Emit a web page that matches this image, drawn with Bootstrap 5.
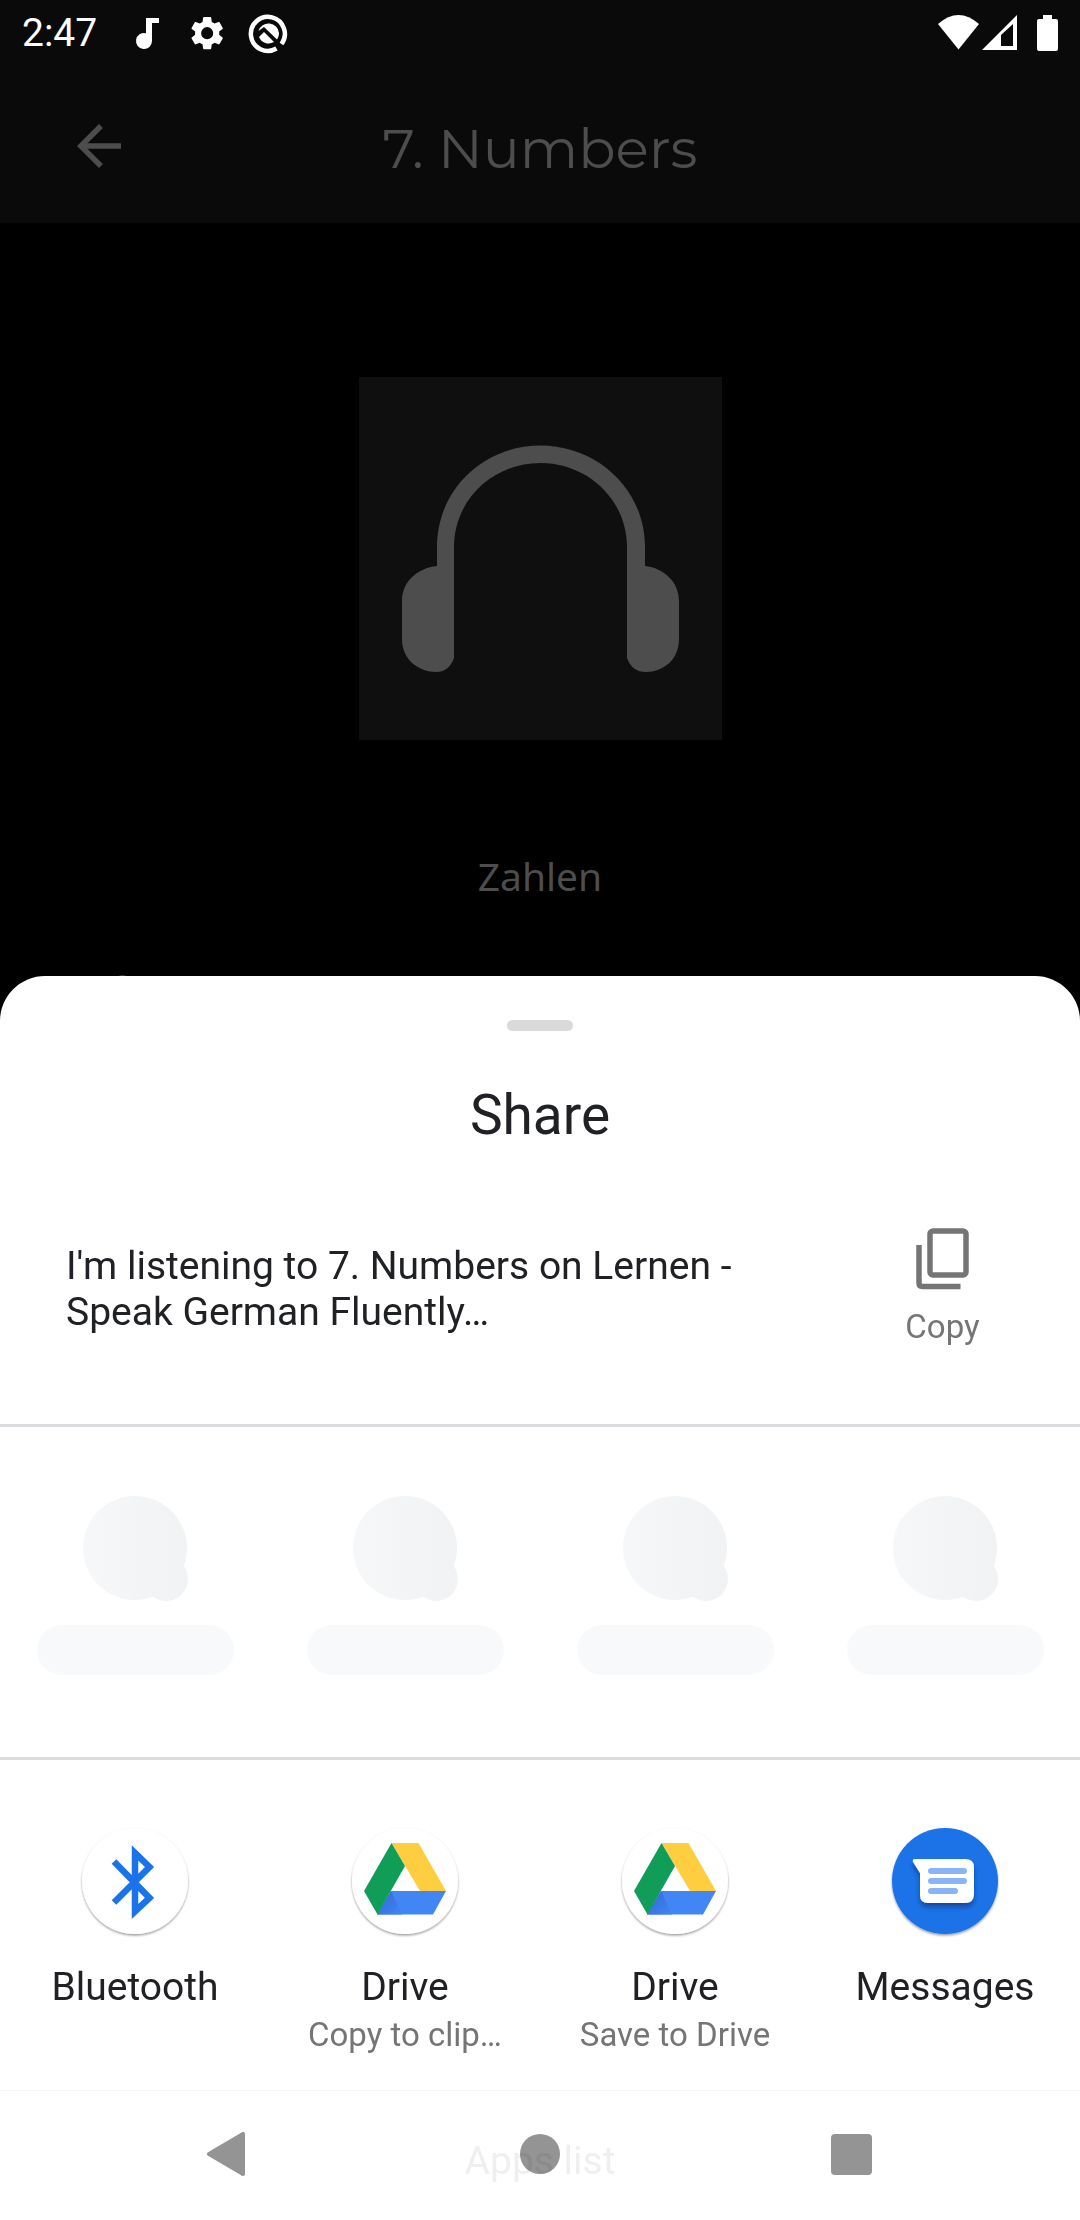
<!DOCTYPE html>
<html lang="en">
<head>
<meta charset="utf-8">
<meta name="viewport" content="width=device-width, initial-scale=1">
<title>Share</title>
<link rel="stylesheet" href="https://cdn.jsdelivr.net/npm/bootstrap@5.3.0/dist/css/bootstrap.min.css">
<style>
  body { background: #000; font-family: Roboto, sans-serif; font-size: 39px; line-height: 46px; color: #4d4d4d; overflow: hidden; }
  svg { display: block; flex: none; }
  .top-area { background: #0a0a0a; }
  .status-bar { height: 66px; padding: 0 20px 0 22px; color: #fff; }
  .title-bar { height: 157px; padding: 2px 66px 0; }
  .title-bar h1 { font: 400 55px/66px Montserrat, Inter, sans-serif; color: #4d4d4d; padding-top: 6px; }
  .side-slot { width: 66px; }
  .track { padding-top: 154px; font-family: "Noto Sans", sans-serif; }
  .cover { width: 363px; background: #0f0f0f; }
  .track-name { margin-top: 110px; line-height: 52px; }
  .track-note { margin-top: 62px; padding-left: 62px; line-height: 52px; }
  .sheet { background: #fff; border-radius: 45px 45px 0 0; color: #202124; }
  .handle { width: 66px; height: 11px; border-radius: 6px; background: #dadada; margin-top: 44px; }
  .sheet h2 { font-size: 55px; line-height: 64px; margin: 52px 0 0; }
  .preview { padding: 78px 66px 0; height: 277px; }
  .preview p { width: 700px; padding-top: 18px; }
  .sub { font-size: 33px; line-height: 39px; color: #757575; }
  .copy-btn { width: 143px; font-family: inherit; }
  .copy-btn svg { margin-bottom: 10px; }
  .section-line { border-top: 3px solid #dadce0; }
  .skeleton { height: 330px; padding-top: 69px; }
  .pill { width: 197px; height: 50px; border-radius: 25px; background: #f8f9fb; margin-top: 24px; }
  .apps { height: 330px; padding-top: 65px; }
  .app-link { color: #202124; text-decoration: none; }
  .app-name { margin-top: 25px; }
  .app-sub { padding: 0 37px; margin-top: 5px; }
  .apps-list { height: 130px; border-top: 1px solid #f5f5f5; padding-top: 47px; color: #efefef; }
  .nav-keys { height: 130px; gap: 267px; }
  .nav-keys .btn { padding: 0; }
  .nav-keys svg { fill: #000; opacity: .42; }
</style>
</head>
<body class="vh-100">
<header class="top-area">
  <div class="status-bar d-flex align-items-center justify-content-between">
    <div class="d-flex align-items-center">
      <span>2:47</span>
      <svg class="ms-4" width="182" height="66" viewBox="121 0 182 66" fill="#fff">
        <path d="M146 18h13v5h-7v18a8 8 0 1 1-6-7.700z"/>
        <g transform="translate(187 13) scale(1.68)"><path d="M19.140 12.940c.04-.3.060-.61.060-.94 0-.32-.02-.64-.07-.94l2.030-1.580c.18-.14.230-.41.120-.61l-1.920-3.320c-.12-.22-.37-.29-.59-.22l-2.390.96c-.5-.38-1.030-.7-1.620-.94l-.36-2.540c-.04-.24-.24-.41-.48-.41h-3.840c-.24 0-.43.17-.47.410l-.36 2.540c-.59.240-1.130.570-1.620.940l-2.390-.96c-.22-.08-.47 0-.59.220L2.740 8.870c-.12.210-.08.470.120.610l2.030 1.580c-.05.3-.09.630-.09.940s.02.640.070.940l-2.030 1.580c-.18.140-.23.410-.12.610l1.920 3.320c.12.220.370.290.590.220l2.390-.96c.5.380 1.030.7 1.620.94l.36 2.540c.05.240.240.410.480.410h3.840c.24 0 .44-.17.470-.41l.36-2.540c.59-.24 1.130-.56 1.620-.94l2.390.96c.22.080.470 0 .590-.22l1.920-3.320c.12-.22.070-.47-.12-.61zM12 15.600a3.600 3.600 0 1 1 0-7.200 3.600 3.600 0 0 1 0 7.200z"/></g>
        <path d="M276.500 48.500A17 17 0 1 1 281.500 44" fill="none" stroke="#fff" stroke-width="4.500"/>
        <path d="M258.500 31a10.500 10.500 0 0 1 20.500 2c0 3-1 5-2 6.500L264 27z"/>
        <path d="M259 37l5-5 10 10a10.500 10.500 0 0 1-15-5z"/>
      </svg>
    </div>
    <svg width="122" height="66" viewBox="938 0 122 66" fill="#fff">
      <path d="M938 24q20.500-18 41 0L958.500 49.500z"/>
      <path fill-rule="evenodd" d="M982 50L1017 15v35zM1001 46h12V24l-12 11z"/>
      <path d="M1043 15h9v4h4q2 0 2 2v28q0 2-2 2h-17q-2 0-2-2V21q0-2 2-2h4z"/>
    </svg>
  </div>
  <div class="title-bar d-flex align-items-center justify-content-between">
    <button class="btn p-0 side-slot border-0" aria-label="Back"><svg width="66" height="66" viewBox="0 0 24 24"><path d="M20 11H7.830l5.590-5.590L12 4l-8 8 8 8 1.410-1.410L7.830 13H20z" fill="#4d4d4d"/></svg></button>
    <h1 class="mb-0">7. Numbers</h1>
    <span class="side-slot"></span>
  </div>
</header>
<main class="track">
  <div class="cover mx-auto">
    <svg width="100%" viewBox="0 0 363 363" fill="#4d4d4d"><path d="M43 224C43 205 58 191 78 189V170C78 112 125 68.500 181.500 68.500S286 112 286 170V189C305 191 320 205 320 224V262C320 283 304 295 287 295Q273 295 268 281V170C268 122 228 86 181.500 86S95 122 95 170V281Q90 295 77 295C60 295 43 283 43 262Z"/></svg>
  </div>
  <div class="track-name text-center">Zahlen</div>
  <div class="track-note">Auf</div>
</main>

<section class="sheet position-fixed bottom-0 start-0 w-100 overflow-hidden" aria-label="Share">
  <div class="handle mx-auto"></div>
  <h2 class="text-center fw-normal">Share</h2>
  <div class="preview d-flex justify-content-between align-items-start">
    <p class="m-0">I'm listening to 7. Numbers on Lernen - Speak German Fluently…</p>
    <button class="btn p-0 border-0 copy-btn sub">
      <svg class="mx-auto" width="66" height="72" viewBox="909 1225 66 72" fill="none" stroke="#757575" stroke-width="5.500"><rect x="929" y="1231" width="36" height="44" rx="3"/><path d="M918 1245v38q0 3.500 3.500 3.500H959.500"/></svg>Copy
    </button>
  </div>
  <div class="section-line"></div>
  <div class="skeleton row g-0">
    <div class="col-3"><svg class="mx-auto" width="105" height="105"><defs><linearGradient id="fade" gradientUnits="userSpaceOnUse" x1="0" x2="105" y1="0" y2="0"><stop stop-color="#f6f7f8"/><stop offset="1" stop-color="#f1f2f3"/></linearGradient></defs><g fill="url(#fade)"><circle cx="52" cy="52" r="52"/><circle cx="83" cy="83" r="22"/></g></svg><div class="pill mx-auto"></div></div>
    <div class="col-3"><svg class="mx-auto" width="105" height="105" fill="url(#fade)"><circle cx="52" cy="52" r="52"/><circle cx="83" cy="83" r="22"/></svg><div class="pill mx-auto"></div></div>
    <div class="col-3"><svg class="mx-auto" width="105" height="105" fill="url(#fade)"><circle cx="52" cy="52" r="52"/><circle cx="83" cy="83" r="22"/></svg><div class="pill mx-auto"></div></div>
    <div class="col-3"><svg class="mx-auto" width="105" height="105" fill="url(#fade)"><circle cx="52" cy="52" r="52"/><circle cx="83" cy="83" r="22"/></svg><div class="pill mx-auto"></div></div>
  </div>
  <div class="section-line"></div>
  <div class="apps row g-0 text-center">
    <a class="col-3 app-link" href="#bluetooth">
      <svg class="mx-auto" width="114" height="114" viewBox="78 1825 114 114">
        <defs><filter id="drop" x="-10%" y="-10%" width="120%" height="125%"><feDropShadow dx="0" dy="1.500" stdDeviation="1.200" flood-opacity=".4"/></filter></defs>
        <circle cx="135" cy="1881" r="53" fill="#fff" filter="url(#drop)"/>
        <path d="M114 1861.500L149 1898 135 1912V1851L149 1868 114 1902" fill="none" stroke="none"/>
        <path d="M114 1861.500L149.500 1898 135 1911.500V1853L149.500 1867 114 1902.500" fill="none" stroke="#1a73e8" stroke-width="6.500"/>
      </svg>
      <div class="app-name">Bluetooth</div>
    </a>
    <a class="col-3 app-link" href="#drive-copy">
      <svg class="mx-auto" width="114" height="114" viewBox="348 1825 114 114">
        <defs>
          <linearGradient id="blueShade" x1="0" x2="1" y1="0" y2="1"><stop stop-color="#3367d6"/><stop offset="1" stop-color="#4285f4"/></linearGradient>
          <g id="driveLogo"><path fill="#ffcd40" d="M391.500 1843H418.500L446 1891H420z"/><path fill="#4285f4" d="M391 1891H446L433 1914.500H377z"/><path fill="url(#blueShade)" d="M391 1891L402 1914.500H377z"/><path fill="#0f9d58" d="M391.500 1843L405 1866 377.500 1914.500 364 1891z"/></g>
        </defs>
        <circle cx="405" cy="1881" r="53" fill="#fff" filter="url(#drop)"/><use href="#driveLogo"/>
      </svg>
      <div class="app-name">Drive</div>
      <div class="app-sub sub text-nowrap">Copy to clip…</div>
    </a>
    <a class="col-3 app-link" href="#drive-save">
      <svg class="mx-auto" width="114" height="114" viewBox="348 1825 114 114"><circle cx="405" cy="1881" r="53" fill="#fff" filter="url(#drop)"/><use href="#driveLogo"/></svg>
      <div class="app-name">Drive</div>
      <div class="app-sub sub text-nowrap">Save to Drive</div>
    </a>
    <a class="col-3 app-link" href="#messages">
      <svg class="mx-auto" width="114" height="114" viewBox="888 1825 114 114">
        <defs><filter id="bubbleDrop" x="-20%" y="-20%" width="140%" height="150%"><feDropShadow dx="0" dy="4" stdDeviation="2.500" flood-color="#0b3f8f" flood-opacity=".8"/></filter></defs>
        <circle cx="945" cy="1881" r="53" fill="#1a73e8" filter="url(#drop)"/>
        <path d="M915 1859H965Q974 1859 974 1867V1894Q974 1903 965 1903H928Q920 1903 920 1895V1873L913 1862Q912 1859 915 1859z" fill="#fff" filter="url(#bubbleDrop)"/>
        <path d="M931 1871h33M931 1881h33M931 1891h24" stroke="#8ab4f8" stroke-width="6" stroke-linecap="round"/>
      </svg>
      <div class="app-name">Messages</div>
    </a>
  </div>
  <div class="apps-list text-center">Apps list</div>
</section>

<nav class="nav-keys position-fixed bottom-0 start-0 w-100 d-flex align-items-center justify-content-center" aria-label="System">
  <button class="btn border-0" aria-label="Back"><svg width="46" height="46"><path d="M39 2v40L5 22z" stroke="#000" stroke-width="4" stroke-linejoin="round"/></svg></button>
  <button class="btn border-0" aria-label="Home"><svg width="46" height="46"><circle cx="23" cy="22" r="20"/></svg></button>
  <button class="btn border-0" aria-label="Recent apps"><svg width="46" height="46"><rect x="1" y="2" width="41" height="41" rx="4"/></svg></button>
</nav>
<script src="https://cdn.jsdelivr.net/npm/bootstrap@5.3.0/dist/js/bootstrap.bundle.min.js"></script>
</body>
</html>
